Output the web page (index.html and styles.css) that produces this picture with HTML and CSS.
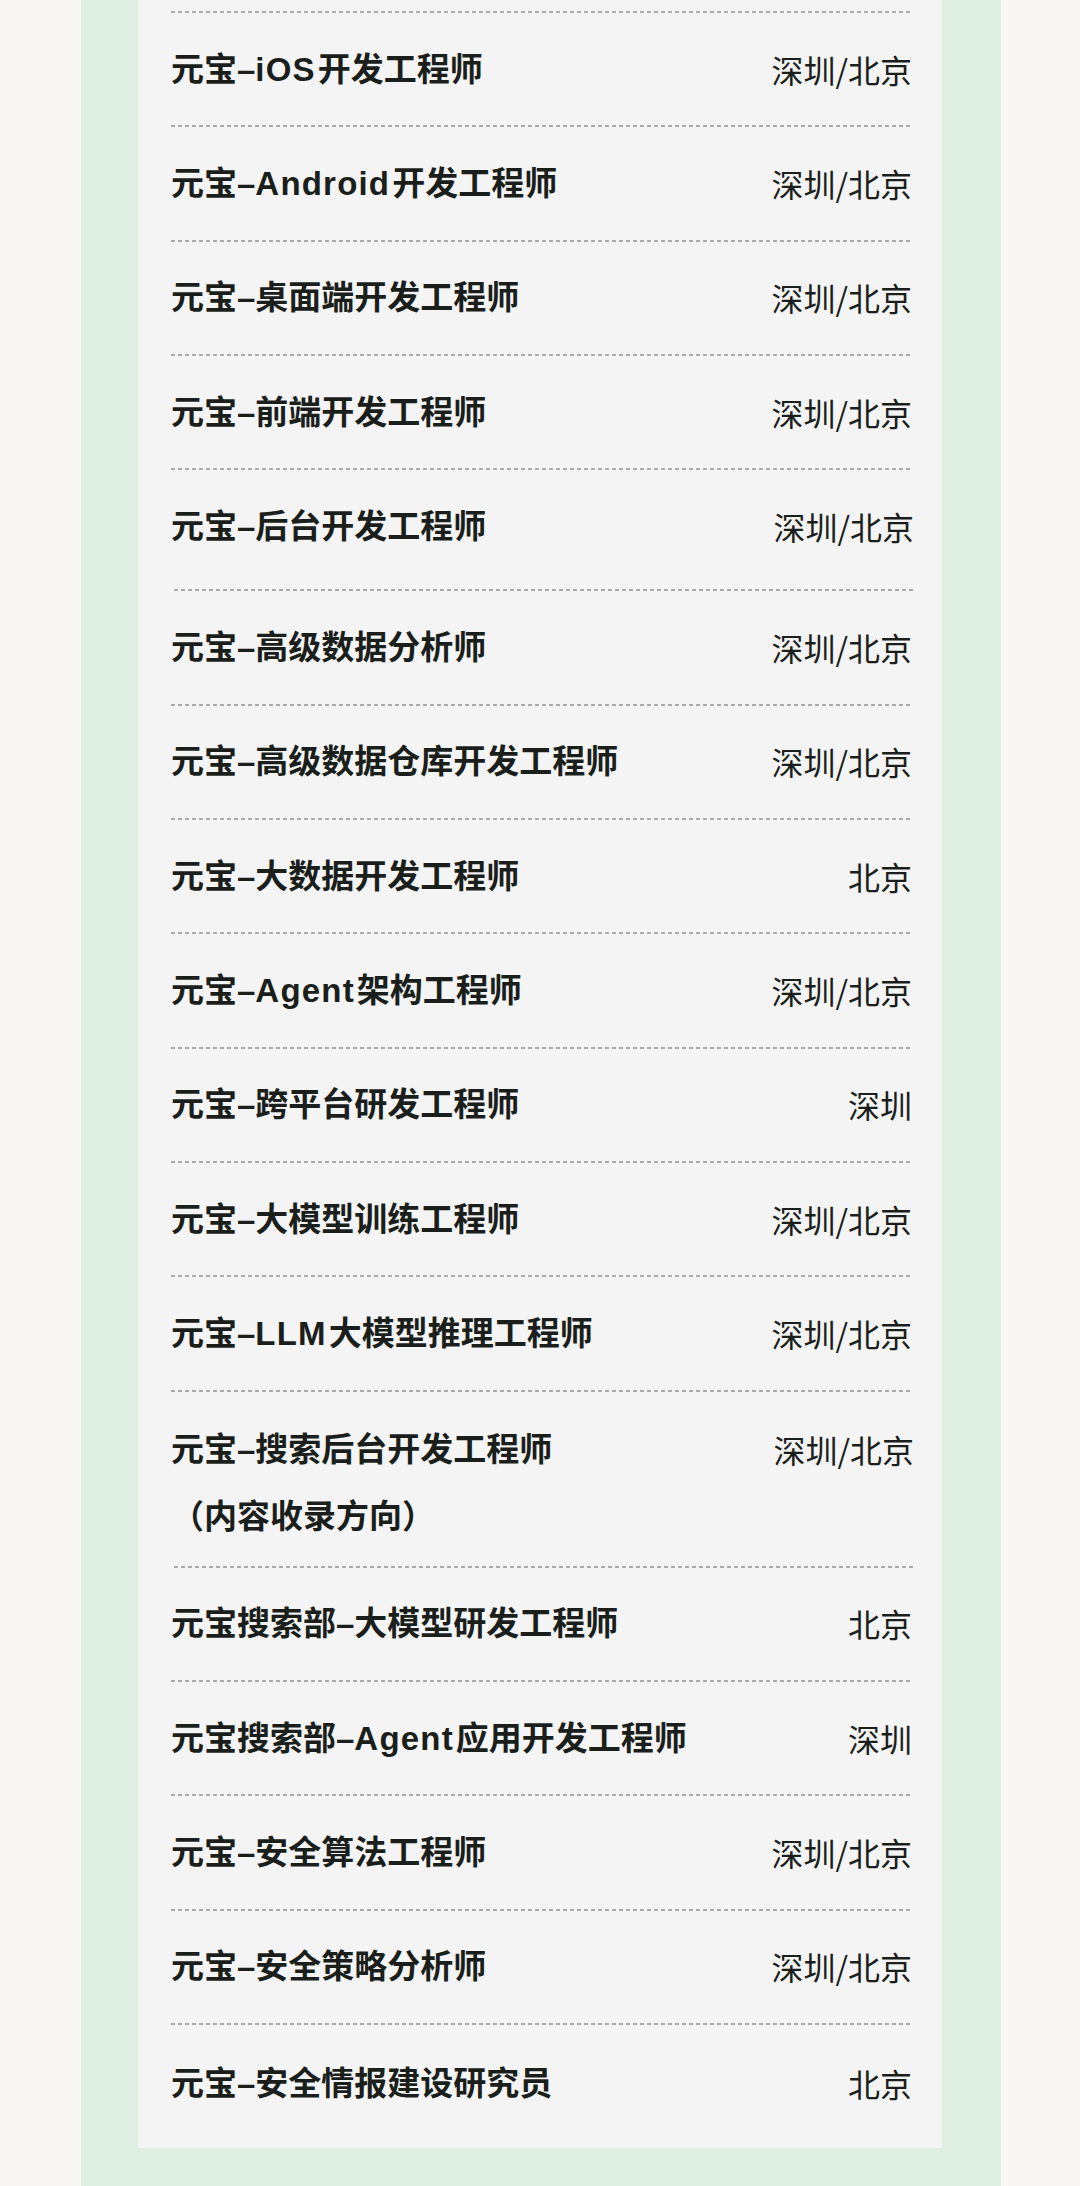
FILE: index.html
```html
<!DOCTYPE html>
<html lang="zh-CN">
<head>
<meta charset="utf-8">
<title>元宝 招聘岗位</title>
<link rel="stylesheet" href="styles.css">
</head>
<body>
<div class="page">
  <section class="band">
    <div class="card">
      <ul class="jobs">
        <li class="job"><span class="job-title">元宝–<span class="latin">iOS</span>开发工程师</span><span class="job-loc">深圳/北京</span></li>
        <li class="job"><span class="job-title">元宝–<span class="latin">Android</span>开发工程师</span><span class="job-loc">深圳/北京</span></li>
        <li class="job"><span class="job-title">元宝–桌面端开发工程师</span><span class="job-loc">深圳/北京</span></li>
        <li class="job"><span class="job-title">元宝–前端开发工程师</span><span class="job-loc">深圳/北京</span></li>
        <li class="job job--alt"><span class="job-title">元宝–后台开发工程师</span><span class="job-loc">深圳/北京</span></li>
        <li class="job"><span class="job-title">元宝–高级数据分析师</span><span class="job-loc">深圳/北京</span></li>
        <li class="job"><span class="job-title">元宝–高级数据仓库开发工程师</span><span class="job-loc">深圳/北京</span></li>
        <li class="job"><span class="job-title">元宝–大数据开发工程师</span><span class="job-loc">北京</span></li>
        <li class="job"><span class="job-title">元宝–<span class="latin">Agent</span>架构工程师</span><span class="job-loc">深圳/北京</span></li>
        <li class="job"><span class="job-title">元宝–跨平台研发工程师</span><span class="job-loc">深圳</span></li>
        <li class="job"><span class="job-title">元宝–大模型训练工程师</span><span class="job-loc">深圳/北京</span></li>
        <li class="job"><span class="job-title">元宝–<span class="latin">LLM</span>大模型推理工程师</span><span class="job-loc">深圳/北京</span></li>
        <li class="job job--alt job--two"><span class="job-title">元宝–搜索后台开发工程师<br>（内容收录方向）</span><span class="job-loc">深圳/北京</span></li>
        <li class="job"><span class="job-title">元宝搜索部–大模型研发工程师</span><span class="job-loc">北京</span></li>
        <li class="job"><span class="job-title">元宝搜索部–<span class="latin">Agent</span>应用开发工程师</span><span class="job-loc">深圳</span></li>
        <li class="job"><span class="job-title">元宝–安全算法工程师</span><span class="job-loc">深圳/北京</span></li>
        <li class="job"><span class="job-title">元宝–安全策略分析师</span><span class="job-loc">深圳/北京</span></li>
        <li class="job"><span class="job-title">元宝–安全情报建设研究员</span><span class="job-loc">北京</span></li>
      </ul>
    </div>
  </section>
</div>
</body>
</html>
```

FILE: styles.css
```css
html, body {
  margin: 0;
  padding: 0;
}

body {
  background: #f8f7f4;
  font-family: "Noto Sans CJK SC", "Noto Sans", sans-serif;
  color: #1b1f1c;
}

.page {
  padding: 0 79px 0 81px;
}

.band {
  background: #dff0e2;
  padding: 0 59px 40px 57px;
  min-height: 2186px;
  box-sizing: border-box;
}

.card {
  background: #f4f4f4;
  padding: 11px 30px 8px 33px;
}

.jobs {
  list-style: none;
  margin: 0;
  padding: 2px 0 0;
  background: repeating-linear-gradient(90deg, #aaaaaa 0 4px, transparent 4px 7px) left top / 100% 2px no-repeat;
}

.job {
  display: flex;
  justify-content: space-between;
  align-items: flex-start;
  gap: 24px;
  padding: 23.7px 0 25.65px;
  font-size: 32px;
  line-height: 65px;
  background: repeating-linear-gradient(90deg, #aaaaaa 0 4px, transparent 4px 7px) left bottom / 100% 2px no-repeat;
}

.job:last-child {
  background: none;
  padding: 26px 0 24px;
}

.job--alt {
  margin: 0 -2px 0 3px;
  padding: 24px 0 32px;
}

.job--alt .job-title {
  margin-left: -3px;
}

.job--two {
  padding: 24px 0 18px;
  line-height: 67px;
}

.job-title {
  font-family: "Liberation Sans", "Noto Sans CJK SC", sans-serif;
  font-size: 33px;
  font-weight: 700;
}

.latin {
  margin-right: 2px;
  letter-spacing: 1.2px;
}

.job-loc {
  flex-shrink: 0;
  font-weight: 400;
  white-space: nowrap;
}
```
